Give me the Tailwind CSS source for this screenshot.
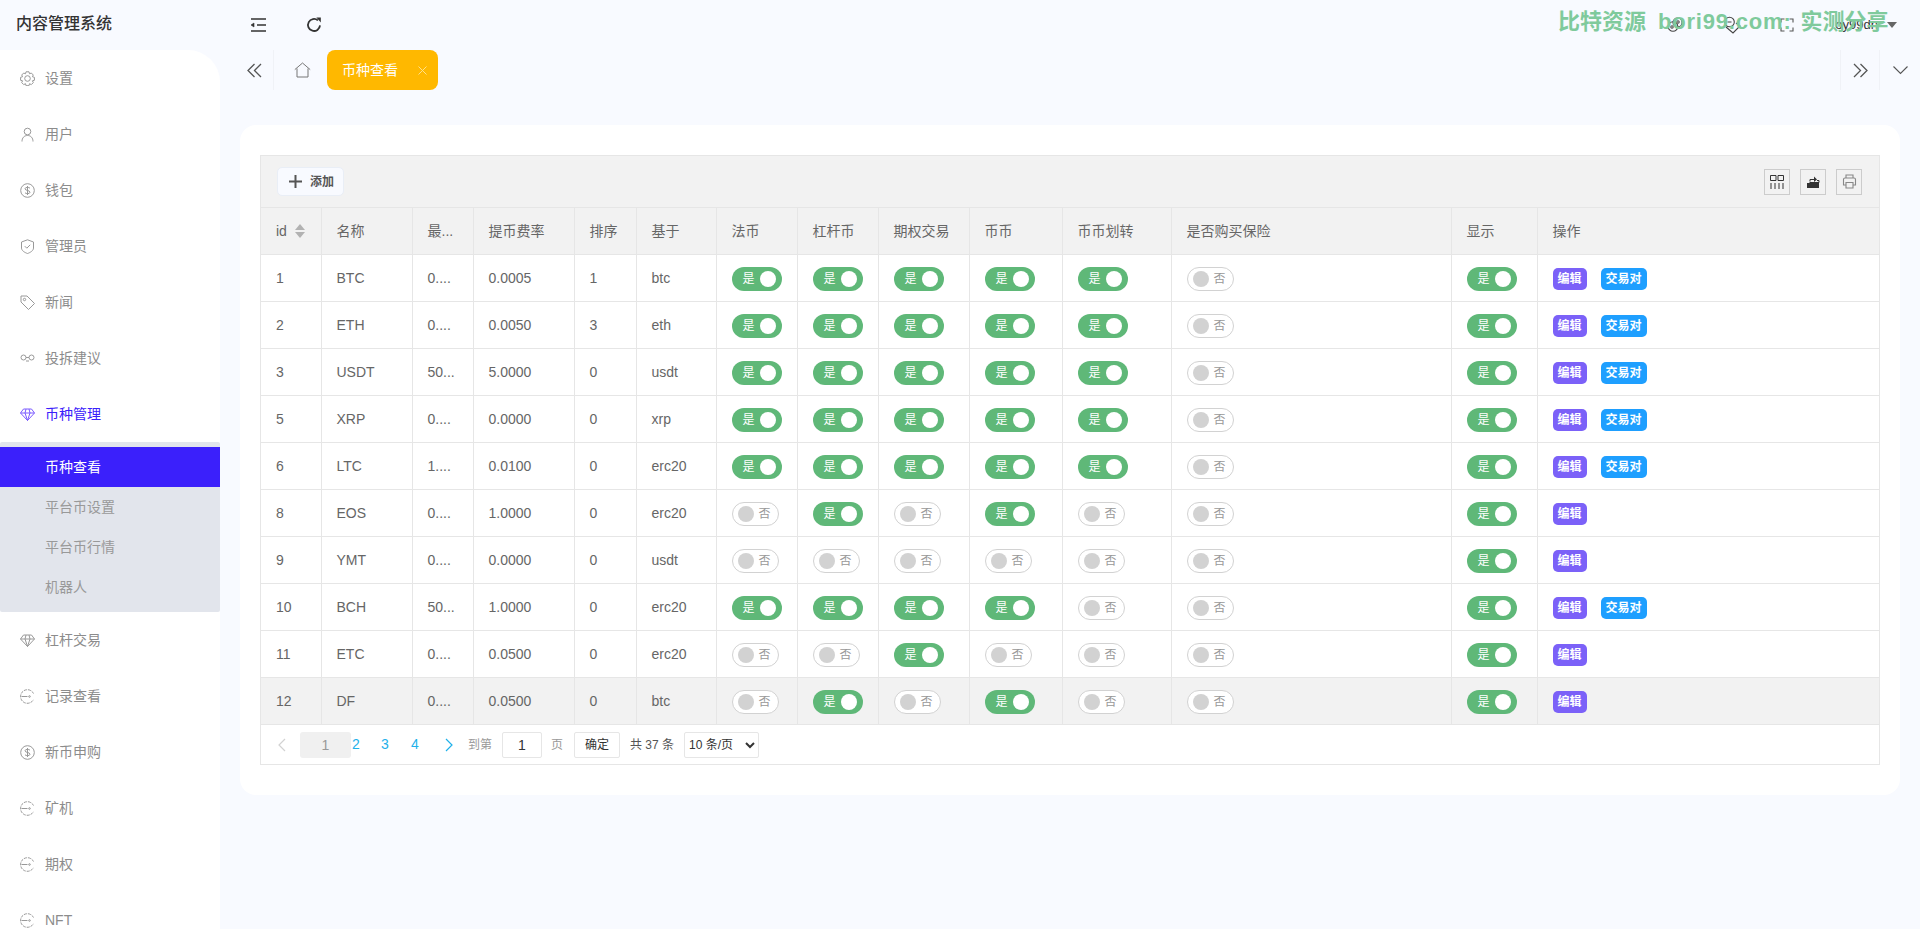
<!DOCTYPE html>
<html lang="zh-CN">
<head>
    <meta charset="UTF-8">
    <title>内容管理系统</title>
    <script src="https://cdn.jsdelivr.net/npm/@tailwindcss/browser@4"></script>
</head>
<body class="h-[929px] overflow-hidden bg-[#f8faff] font-['Liberation_Sans','Noto_Sans_CJK_SC',sans-serif] text-[14px] text-[#666]">
    <!-- watermark over the top bar -->
    <div class="absolute left-[1558px] top-[8px] z-10 flex whitespace-nowrap text-[22px] leading-[28px] font-bold text-[#7fca9c]">
        <span>比特资源</span>
        <span class="ml-[12px] tracking-[0.8px]">bori99.com:</span>
        <span class="ml-[9px]">实测分享</span>
    </div>

    <div class="flex h-[929px]">
        <!-- Sidebar -->
        <aside class="w-[220px] shrink-0 flex flex-col">
            <div class="h-[50px] shrink-0 pl-[16px] text-[16px] leading-[48px] font-medium text-[#333]">内容管理系统</div>
            <nav id="menu" class="flex-1 overflow-hidden bg-white rounded-tr-[32px] text-[#8c8c8c]"></nav>
        </aside>

        <main class="flex-1 min-w-0 flex flex-col">
            <!-- Top bar -->
            <header class="h-[50px] shrink-0 flex items-center text-[#333]">
                <svg class="ml-[30px]" width="16" height="16" viewBox="0 0 16 16" fill="none" stroke="#333" stroke-width="1.6"><path d="M1 2h15M7 8h9M1 14h15"/><path d="M1 8l3-2v4z" fill="#333" stroke-width=".6"/></svg>
                <svg class="ml-[40px]" width="16" height="16" viewBox="0 0 16 16" fill="none" stroke="#333" stroke-width="1.8"><path d="M14 8.400A6 6 0 1 1 11.900 3.400"/><path d="M10.400 0.600h4.400v4.800z" fill="#333" stroke="none"/></svg>
                <div class="ml-auto flex items-center">
                    <svg width="16" height="16" viewBox="0 0 16 16" fill="none" stroke="#444" stroke-width="1.1"><circle cx="6" cy="9.500" r="4.800"/><circle cx="10.500" cy="5.500" r="4.500"/><circle cx="5" cy="10" r="1.200"/><circle cx="11" cy="5" r="1.200"/></svg>
                    <svg class="ml-[40px]" width="18" height="18" viewBox="0 0 18 18" fill="none" stroke="#444" stroke-width="1.1"><circle cx="6.500" cy="6" r="4.800"/><path d="M4.500 6h4M3 11l7 6 7-7-4-3"/></svg>
                    <svg class="ml-[39px]" width="14" height="14" viewBox="0 0 14 14" fill="none" stroke="#555" stroke-width="1.1"><path d="M1 4.500V1h3.500M9.500 1H13v3.500M13 9.500V13H9.500M4.500 13H1V9.500"/></svg>
                    <span class="ml-[41px] text-[13px] text-[#333]">oy99dn</span>
                    <span class="ml-[9px] mr-[23px] w-0 h-0 border-x-[5px] border-x-transparent border-t-[6px] border-t-[#666]"></span>
                </div>
            </header>

            <!-- Tabs -->
            <div class="h-[40px] shrink-0 flex items-center">
                <div class="w-[54px] h-full flex items-center pl-[27px] border-r border-[#f0f2f7]">
                    <svg width="15" height="15" viewBox="0 0 15 15" fill="none" stroke="#555" stroke-width="1.3"><path d="M7.500 1L1 7.500 7.500 14M14 1L7.500 7.500 14 14"/></svg>
                </div>
                <svg class="ml-[20px]" width="17" height="16" viewBox="0 0 17 16" fill="none" stroke="#777" stroke-width="1"><path d="M.8 7.600L8.500 1l7.700 6.600M3 6.500V15h11V6.500"/></svg>
                <div class="ml-[16px] w-[111px] h-full rounded-[8px] bg-[#ffb800] flex items-center pl-[15px] text-white">
                    币种查看
                    <svg class="ml-[20px]" width="9" height="9" viewBox="0 0 9 9" stroke="#ffe08a" stroke-width="1"><path d="M.5.5l8 8M8.500.5l-8 8"/></svg>
                </div>
                <div class="ml-auto w-[40px] h-full flex items-center justify-center border-x border-[#f0f2f7]">
                    <svg width="15" height="15" viewBox="0 0 15 15" fill="none" stroke="#555" stroke-width="1.3"><path d="M1 1l6.500 6.500L1 14M7.500 1L14 7.500 7.500 14"/></svg>
                </div>
                <div class="w-[40px] h-full flex items-center justify-center">
                    <svg width="15" height="9" viewBox="0 0 15 9" fill="none" stroke="#555" stroke-width="1.1"><path d="M.5.5l7 7 7-7"/></svg>
                </div>
            </div>

            <!-- Card -->
            <section class="mt-[35px] mx-[20px] h-[670px] rounded-[16px] bg-white px-[20px] pt-[30px]">
                <div class="w-[1620px] border border-[#e6e6e6]">
                    <!-- Toolbar -->
                    <div class="h-[51px] bg-[#f2f2f2] flex items-center pl-[16px] pr-[17px]">
                        <button class="w-[67px] h-[29px] rounded-[5px] border border-[#e9eef6] bg-[#f8faff] flex items-center pl-[11px] text-[12px] font-bold text-[#555]">
                            <svg width="13" height="13" viewBox="0 0 13 13" fill="#555"><path d="M5.500 0h2v5.500H13v2H7.500V13h-2V7.500H0v-2h5.500z"/></svg>
                            <span class="ml-[8px]">添加</span>
                        </button>
                        <div class="ml-auto flex gap-[10px]">
                            <div class="w-[26px] h-[26px] border border-[#ccc] flex items-center justify-center">
                                <svg width="14" height="14" viewBox="0 0 14 14" fill="none" stroke="#333"><path d="M.5.5h5.500v5H.5zM8 .5h5.500v5H8zM1 8v6M5 8v6M9 8v6M13 8v6"/></svg>
                            </div>
                            <div class="w-[26px] h-[26px] border border-[#ccc] flex items-center justify-center">
                                <svg width="14" height="14" viewBox="0 0 14 14"><path d="M1 8h2l1-1h9v6H1z" fill="#333"/><path d="M4 6.500V4.500h5" fill="none" stroke="#333"/><path d="M8 1.500l3 3-3 2.500z" fill="#333"/><path d="M11 5.500h2v2" fill="none" stroke="#333"/></svg>
                            </div>
                            <div class="w-[26px] h-[26px] border border-[#ccc] flex items-center justify-center">
                                <svg width="15" height="15" viewBox="0 0 15 15" fill="none" stroke="#888" stroke-width="1.1"><path d="M4 4V1h7v3M4 11H1.500V5.500q0-1.500 1.500-1.500h9q1.500 0 1.500 1.500V11H11M4 8.500h7V14H4z"/></svg>
                            </div>
                        </div>
                    </div>

                    <table class="w-[1618px] table-fixed border-collapse">
                        <colgroup>
                            <col class="w-[60px]"><col class="w-[91px]"><col class="w-[61px]"><col class="w-[101px]"><col class="w-[62px]"><col class="w-[80px]"><col class="w-[81px]"><col class="w-[81px]"><col class="w-[91px]"><col class="w-[93px]"><col class="w-[109px]"><col class="w-[280px]"><col class="w-[86px]"><col class="w-[342px]">
                        </colgroup>
                        <thead>
                            <tr class="h-[47px] bg-[#f2f2f2] text-left border-t border-[#e6e6e6]">
                                <th class="font-normal px-[15px] border-r border-[#e6e6e6]"><span class="flex items-center gap-[8px]">id
                                    <span class="flex flex-col gap-[2px]"><span class="w-0 h-0 border-x-[5px] border-x-transparent border-b-[6px] border-b-[#b2b2b2]"></span><span class="w-0 h-0 border-x-[5px] border-x-transparent border-t-[6px] border-t-[#b2b2b2]"></span></span></span></th>
                                <th class="font-normal px-[15px] border-x border-[#e6e6e6]">名称</th>
                                <th class="font-normal px-[15px] border-x border-[#e6e6e6]">最...</th>
                                <th class="font-normal px-[15px] border-x border-[#e6e6e6]">提币费率</th>
                                <th class="font-normal px-[15px] border-x border-[#e6e6e6]">排序</th>
                                <th class="font-normal px-[15px] border-x border-[#e6e6e6]">基于</th>
                                <th class="font-normal px-[15px] border-x border-[#e6e6e6]">法币</th>
                                <th class="font-normal px-[15px] border-x border-[#e6e6e6]">杠杆币</th>
                                <th class="font-normal px-[15px] border-x border-[#e6e6e6]">期权交易</th>
                                <th class="font-normal px-[15px] border-x border-[#e6e6e6]">币币</th>
                                <th class="font-normal px-[15px] border-x border-[#e6e6e6]">币币划转</th>
                                <th class="font-normal px-[15px] border-x border-[#e6e6e6]">是否购买保险</th>
                                <th class="font-normal px-[15px] border-x border-[#e6e6e6]">显示</th>
                                <th class="font-normal px-[15px] border-l border-[#e6e6e6]">操作</th>
                            </tr>
                        </thead>
                        <tbody id="rows"></tbody>
                    </table>

                    <!-- Pager -->
                    <div class="h-[39px] flex items-center text-[12px] text-[#333]">
                        <svg class="ml-[16px]" width="9" height="14" viewBox="0 0 9 14" fill="none" stroke="#d2d2d2" stroke-width="1.2"><path d="M8 1L2 7l6 6"/></svg>
                        <span class="ml-[14px] w-[51px] h-[26px] rounded-[3px] bg-[#f0f0f0] text-[14px] text-[#999] text-center leading-[26px]">1</span>
                        <span class="ml-[1px] w-[8px] text-[14px] text-[#1fb1ea]">2</span>
                        <span class="ml-[21px] w-[8px] text-[14px] text-[#1fb1ea]">3</span>
                        <span class="ml-[22px] w-[8px] text-[14px] text-[#1fb1ea]">4</span>
                        <svg class="ml-[26px]" width="9" height="14" viewBox="0 0 9 14" fill="none" stroke="#1fb1ea" stroke-width="1.2"><path d="M1 1l6 6-6 6"/></svg>
                        <span class="ml-[14px] text-[#999]">到第</span>
                        <span class="ml-[10px] w-[40px] h-[26px] border border-[#e6e6e6] rounded-[2px] text-[14px] text-center leading-[24px]">1</span>
                        <span class="ml-[9px] text-[#999]">页</span>
                        <span class="ml-[11px] w-[46px] h-[26px] border border-[#e6e6e6] rounded-[2px] text-center leading-[24px]">确定</span>
                        <span class="ml-[10px] text-[#555]">共 37 条</span>
                        <select class="ml-[10px] w-[75px] h-[26px] border border-[#e6e6e6] rounded-[2px] text-[12px] text-[#333] bg-white"><option>10 条/页</option></select>
                    </div>
                </div>
            </section>
        </main>
    </div>

    <script>
        // sidebar icons
        const icons = {
            gear: '<circle cx="7.500" cy="7.500" r="2.800"/><path d="M6 .8h3l.5 2 1.800-.8 2 2-.9 1.700 2 .6v3l-2 .5.900 1.800-2 2-1.800-.9-.5 2H6l-.5-2-1.800.9-2-2 .9-1.800-2-.5v-3l2-.6-.9-1.700 2-2 1.800.8z"/>',
            user: '<circle cx="7.500" cy="4.500" r="3.300"/><path d="M2 14.500c0-3.500 2-6 5.500-6s5.500 2.500 5.500 6"/>',
            money: '<circle cx="7.500" cy="7.500" r="6.800"/><path d="M10 5.200C9 4 5 4 5 5.800c0 2 5 1.300 5 3.400 0 1.800-4 1.800-5 .6M7.500 3v9"/>',
            shield: '<path d="M7.500 .8l6 2.200v6c0 2.500-3 4.500-6 5.500-3-1-6-3-6-5.500V3z"/><path d="M4.800 7.200l2 2 3.400-3.400"/>',
            tag: '<path d="M1 1h6l7.500 7.500-6 6L1 7z"/><circle cx="4.500" cy="4.500" r="1.200"/>',
            loop: '<circle cx="3.500" cy="6.500" r="2.500"/><circle cx="11.500" cy="6.500" r="2.500"/><path d="M6 6.500h3M6 10h3"/>',
            gem: '<path d="M3.500 2h8l3 4-7 7.500L.5 6zM.5 6h14M5 6l2.500 7.500L10 6M5 6l1-4M10 6L9 2"/>',
            exit: '<path d="M13.500 4.500A6.800 6.800 0 1 0 13.500 10.500" stroke-dasharray="3 1"/><path d="M1.500 7.500h6"/><circle cx="9.500" cy="7.500" r=".8"/>'
        };

        const menu = [
            ['设置', 'gear'], ['用户', 'user'], ['钱包', 'money'], ['管理员', 'shield'], ['新闻', 'tag'], ['投拆建议', 'loop'],
            ['币种管理', 'gem', true], ['杠杆交易', 'gem'], ['记录查看', 'exit'], ['新币申购', 'money'], ['矿机', 'exit'], ['期权', 'exit'], ['NFT', 'exit']
        ];

        document.getElementById('menu').innerHTML = menu.map(([label, icon, open]) => {
            const item = `<div class="h-[56px] flex items-center pl-[20px] ${open ? 'text-[#3b20fb]' : ''}">
                <svg class="mr-[10px] shrink-0" width="15" height="15" viewBox="0 0 15 15" fill="none" stroke="${open ? '#7c5cff' : '#999'}" stroke-width="1">${icons[icon]}</svg>${label}</div>`;
            if (!open) return item;
            return item + `<div class="h-[170px] py-[5px] bg-[#e2e5ec] rounded-[2px] text-[#999]">
                <div class="h-[40px] bg-[#3b20fb] text-white leading-[40px] pl-[45px]">币种查看</div>
                <div class="h-[40px] leading-[40px] pl-[45px]">平台币设置</div>
                <div class="h-[40px] leading-[40px] pl-[45px]">平台币行情</div>
                <div class="h-[40px] leading-[40px] pl-[45px]">机器人</div>
            </div>`;
        }).join('');

        // id, name, min, fee, sort, base, switches, pair button
        const data = [
            [1, 'BTC', '0....', '0.0005', 1, 'btc', [1, 1, 1, 1, 1, 0, 1], true],
            [2, 'ETH', '0....', '0.0050', 3, 'eth', [1, 1, 1, 1, 1, 0, 1], true],
            [3, 'USDT', '50...', '5.0000', 0, 'usdt', [1, 1, 1, 1, 1, 0, 1], true],
            [5, 'XRP', '0....', '0.0000', 0, 'xrp', [1, 1, 1, 1, 1, 0, 1], true],
            [6, 'LTC', '1....', '0.0100', 0, 'erc20', [1, 1, 1, 1, 1, 0, 1], true],
            [8, 'EOS', '0....', '1.0000', 0, 'erc20', [0, 1, 0, 1, 0, 0, 1], false],
            [9, 'YMT', '0....', '0.0000', 0, 'usdt', [0, 0, 0, 0, 0, 0, 1], false],
            [10, 'BCH', '50...', '1.0000', 0, 'erc20', [1, 1, 1, 1, 0, 0, 1], true],
            [11, 'ETC', '0....', '0.0500', 0, 'erc20', [0, 0, 1, 0, 0, 0, 1], false],
            [12, 'DF', '0....', '0.0500', 0, 'btc', [0, 1, 0, 1, 0, 0, 1], false]
        ];

        function toggle(on) {
            if (on) {
                return `<span class="mt-[1px] w-[50px] h-[24px] rounded-full bg-[#5fb878] flex items-center pl-[11px] text-[12px] text-white">是<span class="ml-auto mr-[6px] w-[16px] h-[16px] rounded-full bg-white"></span></span>`;
            }
            return `<span class="mt-[1px] w-[47px] h-[24px] rounded-full border border-[#d2d2d2] bg-white flex items-center pl-[5px] text-[12px] text-[#999]"><span class="w-[16px] h-[16px] rounded-full bg-[#d2d2d2]"></span><span class="ml-[5px]">否</span></span>`;
        }

        document.getElementById('rows').innerHTML = data.map((row, i) => {
            const [id, name, min, fee, sort, base, flags, pair] = row;
            const plain = [id, name, min, fee, sort, base].map(v => `<td class="px-[15px] border border-[#e6e6e6] first:border-l-0">${v}</td>`).join('');
            const switches = flags.map(f => `<td class="px-[15px] border border-[#e6e6e6]">${toggle(f)}</td>`).join('');
            return `<tr class="h-[47px] ${i === 9 ? 'bg-[#f2f2f2]' : ''}">${plain}${switches}
                <td class="px-[15px] border border-[#e6e6e6] border-r-0"><span class="mt-[1px] flex gap-[14px] text-[12px] font-bold text-white">
                    <span class="w-[34px] h-[22px] rounded-[5px] bg-[#7b61f8] text-center leading-[22px]">编辑</span>
                    ${pair ? '<span class="w-[46px] h-[22px] rounded-[5px] bg-[#1e9fff] text-center leading-[22px]">交易对</span>' : ''}
                </span></td></tr>`;
        }).join('');
    </script>
</body>
</html>
